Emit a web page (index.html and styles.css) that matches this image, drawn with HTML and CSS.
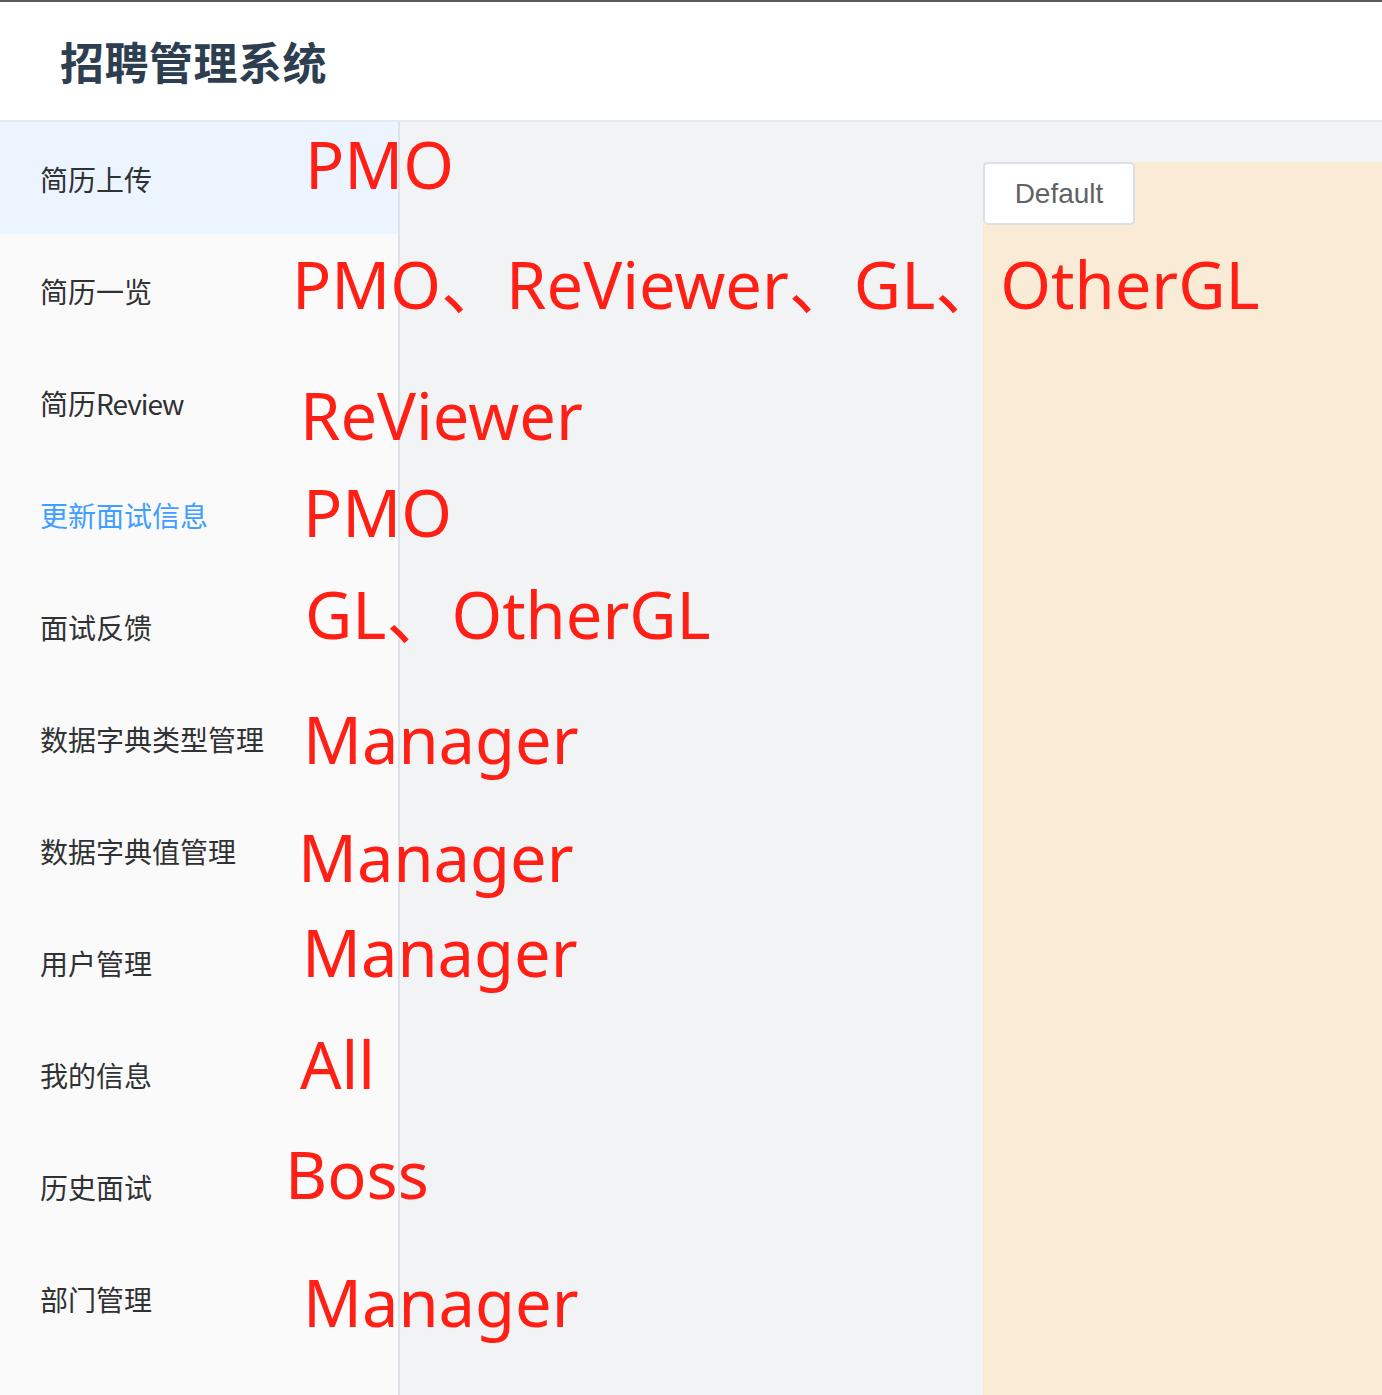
FILE: index.html
```html
<!DOCTYPE html>
<html lang="zh-CN">
<head>
<meta charset="utf-8">
<title>招聘管理系统</title>
<link rel="stylesheet" href="styles.css">
</head>
<body>
<div class="app">
  <header class="header">
    <h1 class="title">招聘管理系统</h1>
  </header>
  <div class="body">
    <aside class="sidebar">
      <ul class="menu">
        <li class="item selected"><span>简历上传</span><em class="note n1">PMO</em></li>
        <li class="item"><span>简历一览</span><em class="note n2">PMO、ReViewer、GL、OtherGL</em></li>
        <li class="item"><span>简历<span class="latin">Review</span></span><em class="note n3">ReViewer</em></li>
        <li class="item active"><span>更新面试信息</span><em class="note n4">PMO</em></li>
        <li class="item"><span>面试反馈</span><em class="note n5">GL、OtherGL</em></li>
        <li class="item"><span>数据字典类型管理</span><em class="note n6">Manager</em></li>
        <li class="item"><span>数据字典值管理</span><em class="note n7">Manager</em></li>
        <li class="item"><span>用户管理</span><em class="note n8">Manager</em></li>
        <li class="item"><span>我的信息</span><em class="note n9">All</em></li>
        <li class="item"><span>历史面试</span><em class="note n10">Boss</em></li>
        <li class="item"><span>部门管理</span><em class="note n11">Manager</em></li>
      </ul>
    </aside>
    <main class="main">
      <section class="panel">
        <button class="btn" type="button">Default</button>
      </section>
    </main>
  </div>
</div>
</body>
</html>
```

FILE: styles.css
```css
html, body {
  margin: 0;
  padding: 0;
  height: 100%;
}
body {
  font-family: "Noto Sans CJK SC", "Noto Sans", sans-serif;
  background: #f2f3f5;
  overflow: hidden;
}
.app {
  height: 100%;
  display: flex;
  flex-direction: column;
  border-top: 2px solid #595959;
  box-sizing: border-box;
}
.header {
  height: 118px;
  flex: none;
  background: #fff;
  border-bottom: 2px solid #e4e7ed;
  display: flex;
  align-items: center;
  padding-left: 60px;
}
.title {
  margin: 0;
  font-size: 44px;
  font-weight: 700;
  color: #2c3e50;
  letter-spacing: 0.5px;
  line-height: 1;
}
.body {
  flex: 1;
  display: flex;
  min-height: 0;
}
.sidebar {
  width: 398px;
  flex: none;
  background: #fafafa;
  border-right: 2px solid #dde1e8;
  position: relative;
  z-index: 2;
}
.menu {
  list-style: none;
  margin: 0;
  padding: 0;
}
.item {
  position: relative;
  height: 112px;
  display: flex;
  align-items: center;
  padding-left: 40px;
  font-size: 28px;
  color: #303133;
}
.item > span {
  position: relative;
  top: 1px;
}
.item .latin {
  letter-spacing: -1px;
}
.item.selected {
  background: #ecf5ff;
}
.item.active {
  color: #409eff;
}
.note {
  position: absolute;
  font-style: normal;
  font-family: "Noto Sans", "Noto Sans CJK SC", sans-serif;
  font-size: 65px;
  line-height: 1;
  color: #ff1f14;
  white-space: nowrap;
}
.n1 { left: 305px; top: 10px; }
.n2 { left: 292px; top: 18px; }
.n3 { left: 300px; top: 37px; }
.n4 { left: 303px; top: 22px; }
.n5 { left: 305px; top: 12px; }
.n6 { left: 303px; top: 25px; }
.n7 { left: 298px; top: 31px; }
.n8 { left: 302px; top: 14px; }
.n9 { left: 300px; top: 14px; }
.n10 { left: 285px; top: 12px; }
.n11 { left: 303px; top: 28px; }
.main {
  flex: 1;
  display: flex;
  justify-content: flex-end;
  align-items: stretch;
  padding-top: 40px;
  background: #f2f3f5;
}
.panel {
  width: 399px;
  background: #faebd7;
}
.btn {
  display: block;
  width: 152px;
  height: 63px;
  margin: 0;
  padding: 0;
  background: #fff;
  border: 2px solid #dcdfe6;
  border-radius: 5px;
  font-family: "Liberation Sans", Arial, sans-serif;
  font-size: 28px;
  color: #606266;
}
```
